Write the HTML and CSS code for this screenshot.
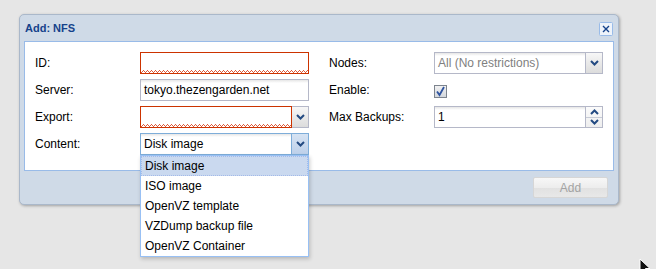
FILE: index.html
```html
<!DOCTYPE html>
<html lang="en">
<head>
  <meta charset="UTF-8" />
  <title>Add: NFS</title>
  <link rel="stylesheet" href="styles.css">
</head>
<body>
  <div class="window">
    <div class="window-header">
      <span class="window-title">Add: NFS</span>
      <span class="tool-close">
        <svg width="14" height="14" viewBox="0 0 14 14">
          <rect x="0.5" y="0.5" width="13" height="13" rx="1" fill="#eef3fa" stroke="#99bbe8"/>
          <path d="M4 4 L10 10 M10 4 L4 10" stroke="#15428b" stroke-width="1.4" fill="none"/>
        </svg>
      </span>
    </div>

    <div class="window-body">
      <div class="form-col">
        <div class="form-row">
          <label>ID:</label>
          <div class="field invalid"><span class="field-text"></span></div>
        </div>
        <div class="form-row">
          <label>Server:</label>
          <div class="field"><span class="field-text">tokyo.thezengarden.net</span></div>
        </div>
        <div class="form-row">
          <label>Export:</label>
          <div class="combo">
            <div class="field invalid"><span class="field-text"></span></div>
            <span class="trigger">
              <svg width="9" height="6" viewBox="0 0 9 6"><path d="M1 1 L4.5 4.5 L8 1" stroke="#234a82" stroke-width="2" fill="none"/></svg>
            </span>
          </div>
        </div>
        <div class="form-row">
          <label>Content:</label>
          <div class="combo open">
            <div class="field"><span class="field-text">Disk image</span></div>
            <span class="trigger">
              <svg width="9" height="6" viewBox="0 0 9 6"><path d="M1 1 L4.5 4.5 L8 1" stroke="#234a82" stroke-width="2" fill="none"/></svg>
            </span>
            <div class="combo-list">
              <div class="list-item selected">Disk image</div>
              <div class="list-item">ISO image</div>
              <div class="list-item">OpenVZ template</div>
              <div class="list-item">VZDump backup file</div>
              <div class="list-item">OpenVZ Container</div>
            </div>
          </div>
        </div>
      </div>

      <div class="form-col">
        <div class="form-row">
          <label>Nodes:</label>
          <div class="combo">
            <div class="field"><span class="field-text empty">All (No restrictions)</span></div>
            <span class="trigger">
              <svg width="9" height="6" viewBox="0 0 9 6"><path d="M1 1 L4.5 4.5 L8 1" stroke="#234a82" stroke-width="2" fill="none"/></svg>
            </span>
          </div>
        </div>
        <div class="form-row">
          <label>Enable:</label>
          <span class="checkbox">
            <svg width="11" height="11" viewBox="0 0 11 11">
              <path d="M2 5.5 L4.5 9 L9 1" stroke="#2f54a0" stroke-width="1.8" fill="none"/>
            </svg>
          </span>
        </div>
        <div class="form-row">
          <label>Max Backups:</label>
          <div class="combo">
            <div class="field"><span class="field-text">1</span></div>
            <span class="spinner">
              <span class="spin-half">
                <svg width="9" height="6" viewBox="0 0 9 6"><path d="M1 5 L4.5 1.5 L8 5" stroke="#234a82" stroke-width="2" fill="none"/></svg>
              </span>
              <span class="spin-half">
                <svg width="9" height="6" viewBox="0 0 9 6"><path d="M1 1 L4.5 4.5 L8 1" stroke="#234a82" stroke-width="2" fill="none"/></svg>
              </span>
            </span>
          </div>
        </div>
      </div>
    </div>

    <div class="window-footer">
      <button class="btn" disabled>Add</button>
    </div>
  </div>

  <svg class="cursor" width="12" height="18" viewBox="0 0 12 18">
    <path d="M1 1 L1 15 L4.5 11.5 L7 17 L9 16 L6.5 10.5 L11 10.5 Z" fill="#111" stroke="#fff" stroke-width="1"/>
  </svg>
</body>
</html>
```

FILE: styles.css
```css
body {
  margin: 0;
  height: 269px;
  overflow: hidden;
  position: relative;
  background: #e6e6e6;
  font-family: "Liberation Sans", Arial, sans-serif;
  font-size: 12px;
  color: #000;
}

.window {
  width: 590px;
  margin: 14px 0 0 19px;
  padding: 0 4px;
  border: 1px solid #aab8ca;
  border-radius: 5px;
  background: #cfdae7;
  box-shadow: 1px 1px 3px rgba(0, 0, 0, 0.3);
}

.window-header {
  height: 26px;
  display: flex;
  align-items: center;
  justify-content: space-between;
}

.window-title {
  font-size: 11px;
  font-weight: bold;
  color: #15428b;
  padding-left: 1px;
}

.tool-close {
  width: 14px;
  height: 14px;
  margin: 2px 1px 0 0;
}

.tool-close svg {
  display: block;
}

.window-body {
  display: grid;
  grid-template-columns: 274px 274px;
  column-gap: 20px;
  background: #fff;
  border: 1px solid #99bbe8;
  padding: 10px 10px 15px;
}

.form-col {
  display: flex;
  flex-direction: column;
  gap: 5px;
}

.form-row {
  display: flex;
  align-items: center;
  height: 22px;
}

.form-row label {
  width: 105px;
  flex: none;
}

.field {
  flex: 1;
  height: 22px;
  box-sizing: border-box;
  border: 1px solid #b5b8c8;
  background: linear-gradient(#e6e6e6, #fff 3px);
  display: flex;
  align-items: center;
}

.field-text {
  padding: 0 3px;
  white-space: nowrap;
}

.field-text.empty {
  color: #808080;
}

.field.invalid {
  border-color: #cc3300;
  background:
    repeating-linear-gradient(90deg, #dd5a3a 0 1px, transparent 1px 4px) 0 100% / 100% 1px no-repeat,
    repeating-linear-gradient(90deg, transparent 0 1px, #dd5a3a 1px 2px, transparent 2px 3px, #dd5a3a 3px 4px) 0 calc(100% - 1px) / 100% 1px no-repeat,
    repeating-linear-gradient(90deg, transparent 0 2px, #dd5a3a 2px 3px, transparent 3px 4px) 0 calc(100% - 2px) / 100% 1px no-repeat,
    #fff;
}

.combo {
  flex: 1;
  display: flex;
  position: relative;
}

.trigger,
.spinner {
  width: 17px;
  height: 22px;
  box-sizing: border-box;
  border: 1px solid #b5b8c8;
  border-left: none;
  background: linear-gradient(#f7f7f7, #e9e9e9 50%, #dcdcdc);
  display: flex;
  align-items: center;
  justify-content: center;
}

.spinner {
  flex-direction: column;
  background: linear-gradient(#fbfbfb, #eeeeee);
}

.spin-half {
  flex: 1;
  width: 100%;
  display: flex;
  align-items: center;
  justify-content: center;
}

.spin-half + .spin-half {
  border-top: 1px solid #c7cbd6;
}

.trigger svg,
.spin-half svg {
  display: block;
}

.combo.open .field,
.combo.open .trigger {
  border-color: #7eadd9;
}

.combo.open .trigger {
  background: linear-gradient(#d6e3f3, #bdd0ea);
}

.combo-list {
  position: absolute;
  top: 100%;
  left: 0;
  right: 0;
  border: 1px solid #98c0f4;
  background: #fff;
  box-shadow: 1px 2px 4px rgba(0, 0, 0, 0.2);
  z-index: 2;
}

.list-item {
  height: 20px;
  line-height: 20px;
  padding-left: 4px;
  box-sizing: border-box;
  white-space: nowrap;
}

.list-item.selected {
  background: #cad9ef;
  border: 1px dotted #a3bae9;
  line-height: 18px;
  padding-left: 3px;
}

.checkbox {
  width: 13px;
  height: 13px;
  box-sizing: border-box;
  border: 1px solid #7d848e;
  background: linear-gradient(#f2f2f2, #d3d7dd);
  margin-top: 2px;
}

.checkbox svg {
  display: block;
}

.window-footer {
  height: 33px;
  display: flex;
  justify-content: flex-end;
  align-items: flex-start;
  padding: 6px 6px 0 0;
  box-sizing: border-box;
}

.btn {
  width: 75px;
  height: 21px;
  border: 1px solid #d6d6d6;
  border-radius: 2px;
  background: linear-gradient(#f7f7f7, #ededed 50%, #e1e1e1 51%, #e8e8e8);
  color: #a3a3a3;
  font-family: "Liberation Sans", Arial, sans-serif;
  font-size: 12px;
  padding: 0;
}

.cursor {
  position: absolute;
  left: 639px;
  top: 258px;
}
```
